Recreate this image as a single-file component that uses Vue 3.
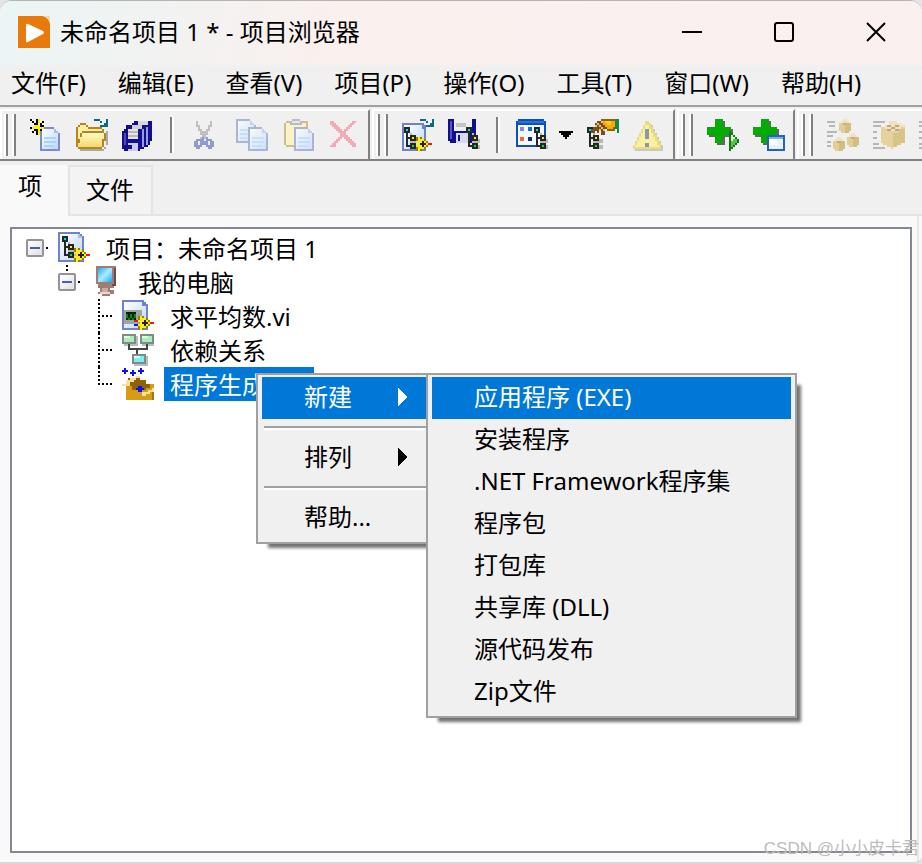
<template>
  <div class="window">
    <svg class="icon-defs" aria-hidden="true">
      <defs>
        <linearGradient id="paper" x1="0" y1="0" x2="1" y2="1">
          <stop offset="0" stop-color="#ffffff" />
          <stop offset="1" stop-color="#bcd6fb" />
        </linearGradient>
        <linearGradient id="screen" x1="0" y1="0" x2="1" y2="1">
          <stop offset="0" stop-color="#28a8e8" />
          <stop offset="0.5" stop-color="#a8ecff" />
          <stop offset="1" stop-color="#10b0f4" />
        </linearGradient>
        <linearGradient id="folder" x1="0" y1="0" x2="0" y2="1">
          <stop offset="0" stop-color="#fffcc8" />
          <stop offset="1" stop-color="#f4d66a" />
        </linearGradient>

        <symbol id="page" viewBox="0 0 10 12">
          <path d="M0 0H7V1H8V2H9V3H10V12H0Z" fill="#7c8cc8" />
          <path d="M1 1H7V3H9V11H1Z" fill="url(#paper)" />
          <path d="M7 1H8V2H9V3H7Z" fill="#a9bce6" />
          <path d="M2 5H8V6H2ZM2 7H8V8H2ZM2 9H7V10H2Z" fill="#a6d4ff" />
        </symbol>
        <symbol id="nodes" viewBox="0 0 8 11">
          <path d="M3 3H4V6H8V8H6V9H8V11H4V10H3Z" fill="#b8b8b8" />
          <path d="M0 0H3V3H2V5H3V4H6V7H3V6H2V9H3V8H6V11H3V10H1V3H0Z" fill="#262626" />
          <path d="M1 1H2V2H1Z" fill="#00e0f0" />
          <path d="M4 5H5V6H4Z" fill="#fff000" />
          <path d="M4 9H5V10H4Z" fill="#00e820" />
        </symbol>
        <symbol id="tag" viewBox="0 0 8 7">
          <path d="M0 0H3V1H5V2H6V5H5V6H3V7H0V5H1V2H0Z" fill="#8c8400" />
          <path d="M1 0H2V1H4V2H5V3H6V4H5V5H4V6H2V7H1V5H0V4H1V3H0V2H1Z" fill="#ffe920" />
          <path d="M2 3H3V2H4V3H5V4H4V5H3V4H2Z" fill="#222" />
          <path d="M6 3H8V4H6Z" fill="#ff1010" />
        </symbol>
        <symbol id="swoop" viewBox="0 0 7 4">
          <path d="M0 0H3V1H4V2H6V0H7V4H3V3H5V2H3V1H0Z" fill="#0c6a84" />
        </symbol>
        <symbol id="plus" viewBox="0 0 13 13">
          <path d="M5 1H9V5H13V9H9V13H5V9H1V5H5Z" fill="#666" />
          <path d="M4 0H8V4H12V8H8V12H4V8H0V4H4Z" fill="#00ad00" />
        </symbol>
        <symbol id="box" viewBox="0 0 6 7">
          <path d="M0 2H1V1H2V0H4V1H5V2H6V6H5V7H1V6H0Z" fill="#e2cd96" />
          <path d="M3 3H4V2H6V6H5V7H3Z" fill="#d4bd80" />
          <path d="M1 1H5V2H1ZM2 0H4V1H2Z" fill="#efe2c2" />
          <path d="M2 2H4V3H2Z" fill="#c8ac80" />
        </symbol>

        <symbol id="icon-new" viewBox="0 0 16 16">
          <use href="#page" x="5" y="4" width="10" height="12" />
          <path d="M0 0H1V1H0ZM1 1H2V2H1ZM2 2H3V3H2ZM6 1H7V2H6ZM5 2H6V3H5ZM3 0H4V3H3ZM0 4H3V5H0ZM5 3H7V4H5ZM2 5H3V6H2ZM1 6H2V7H1ZM3 5H4V8H3ZM5 5H6V6H5Z" fill="#000" />
          <path d="M4 0H5V2H4ZM2 3H5V2H4V1H5V4H7V5H5V8H4V5H1V4H2Z" fill="#fff200" />
        </symbol>
        <symbol id="icon-open" viewBox="0 0 16 16">
          <path d="M2 15H14V14H15V6H16V13H15V15H14V16H2Z" fill="#aaa" />
          <path d="M0 4H1V3H2V2H5V3H6V4H13V5H14V7H15V11H14V14H13V15H1V14H0Z" fill="#b58420" />
          <path d="M1 4H2V3H5V4H6V5H13V6H3V7H2V10H1Z" fill="#fff0a0" />
          <path d="M3 7H14V10H13V14H1V12H2V9H3Z" fill="url(#folder)" />
          <use href="#swoop" x="9" y="0" width="7" height="4" />
        </symbol>
        <symbol id="icon-save-all" viewBox="0 0 16 16">
          <path d="M5 2H6V1H15V11H14V13H13V14H11V15H5Z" fill="#10108e" />
          <path d="M8 1H13V3H8Z" fill="#d8d8d8" />
          <path d="M2 3H12V14H10V15H2Z" fill="#10108e" />
          <path d="M5 3H10V5H5Z" fill="#cfcfcf" />
          <path d="M12 4H13V13H12ZM10 5H11V14H10Z" fill="#9a9adc" />
          <path d="M0 6H1V5H10V15H9V16H1V15H0Z" fill="#10108e" />
          <path d="M3 5H8V10H3Z" fill="#e4e4e4" />
          <path d="M3 6H8V7H3ZM3 8H8V9H3Z" fill="#b8b8b8" />
          <path d="M3 12H8V16H3Z" fill="#c9c9f2" />
          <path d="M3 13H5V15H3Z" fill="#10108e" />
          <path d="M1 7H2V13H1Z" fill="#4a4ab8" />
        </symbol>
        <symbol id="icon-cut" viewBox="0 0 16 16">
          <path d="M3 1H4V3H5V5H6V6H8V5H9V3H10V1H11V4H10V6H9V8H8V9H9V10H5V9H6V8H5V6H4V4H3Z" fill="#c0c0c0" />
          <path d="M3 10H6V9H7V13H6V14H5V15H3V14H2V11H3ZM4 11H5V13H4ZM8 9H9V10H11V11H12V14H11V15H9V14H8V13H7V11H8ZM9 11H10V13H9Z" fill="#8e9bd0" fill-rule="evenodd" />
        </symbol>
        <symbol id="icon-copy" viewBox="0 0 16 16">
          <g opacity="0.6">
            <use href="#page" x="0" y="0" width="10" height="12" />
            <use href="#page" x="6" y="4" width="10" height="12" />
          </g>
        </symbol>
        <symbol id="icon-paste" viewBox="0 0 16 16">
          <g opacity="0.6">
            <path d="M2 1H13V13H12V14H2V13H1V2H2Z" fill="#bd9a4e" />
            <path d="M2 2H12V13H2Z" fill="#fff6ae" />
            <path d="M4 1H5V0H9V1H10V3H4Z" fill="#8f98a8" />
            <path d="M5 1H9V2H5Z" fill="#dce0e8" />
            <use href="#page" x="6" y="4" width="10" height="12" />
          </g>
        </symbol>
        <symbol id="icon-delete" viewBox="0 0 16 16">
          <path d="M1 1H3V2H4V3H5V4H6V5H7V6H8V5H9V4H10V3H11V2H12V1H14V2H13V3H12V4H11V5H10V6H9V8H10V9H11V10H12V11H13V12H14V14H12V13H11V12H10V11H9V10H8V9H7V10H6V11H5V12H4V14H1V13H2V12H3V11H4V10H5V9H6V7H5V6H4V5H3V4H2V3H1Z" fill="#f4a9b6" />
        </symbol>

        <symbol id="icon-project" viewBox="0 0 16 16">
          <path d="M0 0H11V1H12V2H13V15H0Z" fill="#6f83c8" />
          <path d="M1 1H10V3H12V14H1Z" fill="url(#paper)" />
          <path d="M10 1H11V2H12V3H10Z" fill="#aebfe8" />
          <use href="#nodes" x="2" y="2" width="8" height="11" />
          <use href="#tag" x="8" y="8" width="8" height="7" />
        </symbol>
        <symbol id="icon-new-project" viewBox="0 0 16 16">
          <path d="M0 2H11V3H12V16H0Z" fill="#6f83c8" />
          <path d="M1 3H10V5H11V15H1Z" fill="url(#paper)" />
          <use href="#nodes" x="1" y="4" width="8" height="11" />
          <use href="#tag" x="7" y="9" width="8" height="7" />
          <use href="#swoop" x="9" y="0" width="7" height="4" />
        </symbol>
        <symbol id="icon-save-project" viewBox="0 0 16 16">
          <path d="M0 0H14V12H1V11H0Z" fill="#10108e" />
          <path d="M3 0H12V6H3Z" fill="#eee" />
          <path d="M4 2H9V4H4Z" fill="#c4c4c4" />
          <path d="M4 7H10V12H4Z" fill="#d8d8ee" />
          <path d="M5 8H6V11H5Z" fill="#10108e" />
          <path d="M1 1H2V10H1Z" fill="#5555c0" />
          <use href="#nodes" x="9" y="4" width="8" height="11" />
        </symbol>
        <symbol id="icon-view" viewBox="0 0 16 16">
          <path d="M0 1H1V0H14V1H15V14H0Z" fill="#0b50c0" />
          <path d="M1 3H14V13H1Z" fill="#f6faff" />
          <path d="M1 1H14V2H1Z" fill="#2c72dc" />
          <path d="M2 4H4V6H2Z" fill="#8a8ace" />
          <path d="M6 4H8V6H6Z" fill="#0a70e0" />
          <path d="M2 9H4V11H2Z" fill="#ff6430" />
          <path d="M6 9H8V11H6Z" fill="#0a3090" />
          <use href="#nodes" x="9" y="4" width="8" height="11" />
        </symbol>
        <symbol id="icon-properties" viewBox="0 0 16 16">
          <use href="#nodes" x="0" y="4" width="8" height="11" />
          <path d="M2 5H3V4H4V2H5V1H7V0H10V5H9V8H7V6H6V7H5V6H4V7H2Z" fill="#785020" />
          <path d="M4 3H5V2H6V3H7V4H8V5H9V6H8V5H7V4H6V3H5V4H4ZM7 1H8V2H9V3H8V2H7ZM6 5H7V6H6Z" fill="#efc278" />
          <path d="M8 1H9V0H13V1H14V4H13V5H10V4H9V3H8Z" fill="#ffa600" />
          <path d="M9 1H12V3H10V2H9Z" fill="#ffcb28" />
          <path d="M7 0H14V1H7ZM10 5H13V4H14V6H10Z" fill="#8c640c" />
          <path d="M14 0H16V7H15V5H14Z" fill="#148848" />
        </symbol>
        <symbol id="icon-warning" viewBox="0 0 16 16">
          <path d="M7 2H9V3H10V5H11V7H12V9H13V11H14V13H15V16H1V14H2V12H3V10H4V8H5V6H6V4H7Z" fill="#c8c8c4" />
          <path d="M6 1H8V2H9V4H10V6H11V8H12V10H13V12H14V15H0V13H1V11H2V9H3V7H4V5H5V3H6Z" fill="#e8dc7c" />
          <path d="M6 3H8V5H9V7H10V9H11V11H12V13H13V14H1V13H2V11H3V9H4V7H5V5H6Z" fill="#faf0a2" />
          <path d="M6 5H8V10H6ZM6 12H8V14H6Z" fill="#9095ad" />
        </symbol>
        <symbol id="icon-add-run" viewBox="0 0 16 16">
          <use href="#plus" x="0" y="0" width="13" height="13" />
          <path d="M11 6H12V7H13V8H14V9H15V10H16V12H15V13H14V14H13V15H12V16H11Z" fill="#147a14" />
          <path d="M12 8H13V9H14V10H15V12H14V13H13V14H12Z" fill="#5cc04c" />
          <path d="M12 8H13V9H14V10H13V11H12Z" fill="#d8f6cc" />
        </symbol>
        <symbol id="icon-add-window" viewBox="0 0 16 16">
          <use href="#plus" x="0" y="0" width="13" height="13" />
          <path d="M7 8H16V16H7Z" fill="#2860bc" />
          <path d="M8 9H15V10H8Z" fill="#78aef0" />
          <path d="M8 10H15V15H8Z" fill="#e6f2ff" />
          <path d="M8 10H12V13H8Z" fill="#fff" />
        </symbol>
        <symbol id="icon-build-all" viewBox="0 0 16 16">
          <path d="M0 1H4V2H0ZM1 3H4V4H1ZM0 6H5V7H0ZM0 8H3V9H0ZM0 11H2V12H0ZM0 13H2V14H0Z" fill="#b6b6b6" />
          <use href="#box" x="6" y="0" width="6" height="7" />
          <use href="#box" x="3" y="9" width="6" height="7" />
          <use href="#box" x="10" y="7" width="6" height="7" />
        </symbol>
        <symbol id="icon-build" viewBox="0 0 16 16">
          <path d="M0 1H6V2H0ZM0 3H4V4H0ZM0 6H2V7H0ZM0 9H2V10H0ZM0 12H3V13H0ZM0 14H6V15H0Z" fill="#b6b6b6" />
          <path d="M4 4H6V3H8V1H12V2H14V3H16V12H14V13H12V14H10V15H9V14H7V13H5V12H4Z" fill="#e6d39c" />
          <path d="M10 7H13V5H16V12H14V13H12V14H10Z" fill="#d9c488" />
          <path d="M4 4H6V3H8V1H12V2H14V3H16V4H14V5H12V6H8V5H6V4Z" fill="#efe2c2" />
          <path d="M7 3H9V4H11V3H13V4H11V5H13V6H11V5H9V6H7V5H9V4H7Z" fill="#c4a67a" />
        </symbol>

        <symbol id="icon-computer" viewBox="0 0 16 16">
          <path d="M3 0H13V10H12V11H10V12H12V14H10V15H6V14H4V13H5V11H4V9H3Z" fill="#a07c74" />
          <path d="M4 1H11V8H4Z" fill="url(#screen)" />
          <path d="M12 1H13V10H11V9H12Z" fill="#6c4c48" />
          <path d="M6 11H9V13H6Z" fill="#c8aca4" />
          <path d="M5 13H10V14H5Z" fill="#e6d8d0" />
        </symbol>
        <symbol id="icon-vi" viewBox="0 0 16 16">
          <path d="M0 0H11V1H12V2H13V15H0Z" fill="#6f83c8" />
          <path d="M1 1H10V3H12V14H1Z" fill="url(#paper)" />
          <path d="M1 5H10V12H1Z" fill="#a3a3a3" />
          <path d="M2 6H7V10H2Z" fill="#002800" />
          <path d="M2 7H3V9H2ZM3 9H4V10H3ZM4 7H5V9H4ZM5 9H6V10H5ZM6 7H7V9H6Z" fill="#008818" />
          <path d="M6 10H8V11H6Z" fill="#f01010" />
          <path d="M6 12H8V13H6Z" fill="#1010ff" />
          <use href="#tag" x="8" y="8" width="8" height="7" />
        </symbol>
        <symbol id="icon-dependencies" viewBox="0 0 16 16">
          <path d="M3 5H4V7H12V5H13V8H8V11H7V8H3Z" fill="#444" />
          <path d="M1 1H8V6H1ZM10 1H16V6H10ZM6 11H13V16H6Z" fill="#bcbcbc" />
          <path d="M0 0H7V5H0ZM9 0H16V5H9ZM5 10H12V15H5Z" fill="#7c8c88" />
          <path d="M1 1H6V4H1ZM10 1H15V4H10Z" fill="#aaeeb4" />
          <path d="M6 11H11V14H6Z" fill="#78f0f8" />
          <path d="M1 1H4V2H1ZM10 1H13V2H10ZM6 11H9V12H6Z" fill="#e4fce8" />
          <path d="M3 5H4V7H3ZM12 5H13V7H12Z" fill="#444" />
        </symbol>
        <symbol id="icon-build-specs" viewBox="0 0 16 16">
          <path d="M1 0H2V1H3V2H2V3H1V2H0V1H1ZM5 1H6V2H7V3H6V4H5V3H4V2H5ZM9 0H10V1H11V2H10V3H9V2H8V1H9Z" fill="#1010ee" />
          <path d="M2 8H16V16H2Z" fill="#d79c16" />
          <path d="M3 5H9V6H12V8H14V10H12V11H5V9H2V8H3Z" fill="#8f6208" />
          <path d="M0 8H2V6H4V5H7V4H9V5H7V6H6V7H4V9H0Z" fill="#f9e39a" />
          <path d="M10 12H13V11H15V10H16V12H14V13H12V14H10Z" fill="#f9e39a" />
          <path d="M8 9H10V10H11V11H10V12H8V11H7V10H8Z" fill="#1010ee" />
          <path d="M15 12H16V16H15Z" fill="#aa720c" />
        </symbol>
      </defs>
    </svg>

    <header class="title-bar">
      <svg class="app-icon" viewBox="0 0 32 32" aria-hidden="true">
        <path d="M0 0H25Q31 1 32 8V32H0Z" fill="#e87a0c" />
        <path d="M25 0H32V7Q30 2 25 0Z" fill="#f6d3b2" />
        <path d="M8 9Q8 7 10 8L25 15Q27 16.5 25 18L10 26Q8 27 8 25Z" fill="#fff" />
      </svg>
      <h1 class="title">未命名项目 1 * - 项目浏览器</h1>
      <div class="window-controls">
        <button class="control" type="button" aria-label="最小化">
          <svg viewBox="0 0 20 20"><path d="M0 10H20" /></svg>
        </button>
        <button class="control" type="button" aria-label="最大化">
          <svg viewBox="0 0 20 20"><rect x="1" y="1" width="18" height="18" rx="2" /></svg>
        </button>
        <button class="control" type="button" aria-label="关闭">
          <svg viewBox="0 0 20 20"><path d="M1 1L19 19M19 1L1 19" /></svg>
        </button>
      </div>
    </header>

    <nav class="menu-bar">
      <button v-for="menu in menus" :key="menu" class="menu-button" type="button">{{ menu }}</button>
    </nav>

    <div class="toolbars">
      <div v-for="(group, index) in toolbars" :key="index" class="toolbar" role="toolbar">
        <span class="grip"></span>
        <template v-for="(tool, i) in group" :key="i">
          <span v-if="tool.separator" class="tool-separator"></span>
          <button
            v-else
            class="tool"
            :class="{ 'has-arrow': tool.arrow }"
            type="button"
            :disabled="tool.disabled"
            :aria-label="tool.label"
          >
            <svg class="icon"><use :href="'#icon-' + tool.icon" /></svg>
            <svg v-if="tool.arrow" class="drop-arrow" viewBox="0 0 14 8">
              <path d="M0 0H14V2H12V4H10V6H8V8H6V6H4V4H2V2H0Z" />
            </svg>
          </button>
        </template>
      </div>
    </div>

    <div class="tabs" role="tablist">
      <button
        v-for="tab in tabs"
        :key="tab"
        class="tab"
        :class="{ active: tab === activeTab }"
        type="button"
        role="tab"
        :aria-selected="tab === activeTab"
        @click="activeTab = tab"
      >
        {{ tab }}
      </button>
    </div>

    <main class="pane">
      <div class="tree-panel">
        <ul class="tree" role="tree">
          <li
            v-for="node in nodes"
            :key="node.label"
            class="node"
            :class="'level-' + node.level"
            role="treeitem"
          >
            <span class="joint" :class="node.joint">
              <button v-if="node.expandable" class="expander" type="button" aria-label="折叠"></button>
            </span>
            <svg class="icon"><use :href="'#icon-' + node.icon" /></svg>
            <span class="node-label" :class="{ selected: node.selected }">{{ node.label }}</span>
          </li>
        </ul>

        <div class="popup context-menu" role="menu">
          <button class="popup-item highlighted" type="button" role="menuitem">
            新建
            <svg class="sub-arrow" viewBox="0 0 10 18"><path d="M0 0L10 9L0 18Z" /></svg>
          </button>
          <hr class="popup-separator" />
          <button class="popup-item" type="button" role="menuitem">
            排列
            <svg class="sub-arrow" viewBox="0 0 10 18"><path d="M0 0L10 9L0 18Z" /></svg>
          </button>
          <hr class="popup-separator" />
          <button class="popup-item" type="button" role="menuitem">帮助...</button>

          <div class="popup sub-menu" role="menu">
            <button
              v-for="(item, index) in buildTypes"
              :key="item"
              class="popup-item"
              :class="{ highlighted: index === 0 }"
              type="button"
              role="menuitem"
            >
              {{ item }}
            </button>
          </div>
        </div>
      </div>
    </main>

    <span class="watermark">CSDN @小小皮卡君</span>
  </div>
</template>

<script setup>
import { ref } from "vue";

const menus = ["文件(F)", "编辑(E)", "查看(V)", "项目(P)", "操作(O)", "工具(T)", "窗口(W)", "帮助(H)"];

const toolbars = [
  [
    { icon: "new", label: "新建" },
    { icon: "open", label: "打开" },
    { icon: "save-all", label: "保存全部" },
    { separator: true },
    { icon: "cut", label: "剪切", disabled: true },
    { icon: "copy", label: "复制", disabled: true },
    { icon: "paste", label: "粘贴", disabled: true },
    { icon: "delete", label: "删除", disabled: true },
  ],
  [
    { icon: "new-project", label: "新建项目" },
    { icon: "save-project", label: "保存项目" },
    { separator: true },
    { icon: "view", label: "筛选视图", arrow: true },
    { icon: "properties", label: "属性" },
    { icon: "warning", label: "解决冲突", disabled: true },
  ],
  [
    { icon: "add-run", label: "添加目标" },
    { icon: "add-window", label: "新建VI" },
  ],
  [
    { icon: "build-all", label: "全部生成", disabled: true },
    { icon: "build", label: "生成", disabled: true },
    { icon: "build", label: "部署", disabled: true },
  ],
];

const tabs = ["项", "文件"];
const activeTab = ref("项");

const nodes = [
  { label: "项目：未命名项目 1", icon: "project", level: 0, joint: "root", expandable: true },
  { label: "我的电脑", icon: "computer", level: 1, joint: "end", expandable: true },
  { label: "求平均数.vi", icon: "vi", level: 2, joint: "through" },
  { label: "依赖关系", icon: "dependencies", level: 2, joint: "through" },
  { label: "程序生成规范", icon: "build-specs", level: 2, joint: "end", selected: true },
];

const buildTypes = [
  "应用程序 (EXE)",
  "安装程序",
  ".NET Framework程序集",
  "程序包",
  "打包库",
  "共享库 (DLL)",
  "源代码发布",
  "Zip文件",
];
</script>

<style>
body {
  margin: 0;
  background: #e4e4e4;
}
</style>

<style scoped>
.window {
  position: relative;
  box-sizing: border-box;
  display: flex;
  flex-direction: column;
  min-height: 100vh;
  border-top: 1px solid #b4b4b4;
  border-bottom: 2px solid #d8d8d8;
  border-radius: 12px 12px 8px 0;
  background: #f9f9f9;
  color: #000;
  font-family: "Noto Sans", "Noto Sans CJK SC", sans-serif;
  font-size: 24px;
  line-height: 34px;
  white-space: nowrap;
  overflow: hidden;
}

button {
  padding: 0;
  border: 0;
  background: none;
  color: inherit;
  font: inherit;
  white-space: nowrap;
}

.icon-defs {
  position: absolute;
  width: 0;
  height: 0;
}

.icon {
  flex: none;
  display: block;
  width: 32px;
  height: 32px;
  shape-rendering: crispEdges;
}

/* Title bar */
.title-bar {
  display: flex;
  align-items: center;
  box-sizing: border-box;
  height: 64px;
  padding: 0 0 2px 18px;
  background: linear-gradient(100deg, #ebf5f5 0%, #f0f3f2 15%, #faf0ee 36%, #f9f0ef 100%);
}

.app-icon {
  width: 32px;
  height: 32px;
}

.title {
  flex: 1;
  margin: 0 0 0 10px;
  font-size: 24px;
  font-weight: 400;
}

.window-controls {
  display: flex;
}

.control {
  display: flex;
  align-items: center;
  justify-content: center;
  width: 92px;
  height: 60px;
}

.control svg {
  width: 20px;
  height: 20px;
  fill: none;
  stroke: #000;
  stroke-width: 2;
}

/* Menu bar */
.menu-bar {
  display: flex;
  gap: 32px;
  box-sizing: border-box;
  height: 42px;
  padding: 0 0 4px 11px;
  background: #f0f0f0;
  border-bottom: 2px solid #a0a0a0;
}

/* Toolbars */
.toolbars {
  display: flex;
  height: 50px;
  padding-top: 2px;
  background: #f0f0f0;
  border-bottom: 2px solid #808080;
  overflow: hidden;
}

.toolbar {
  flex: none;
  display: flex;
  align-items: center;
  height: 50px;
  padding: 0 1px 0 4px;
  border-top: 2px solid #fff;
  border-right: 2px solid #808080;
  box-shadow: inset 2px 0 #fff;
  box-sizing: border-box;
  margin-right: 2px;
}

.toolbar:last-child {
  border-right: 0;
}

.grip {
  width: 12px;
  height: 42px;
  margin-right: 7px;
  background: linear-gradient(
    90deg,
    #fff 0 2px,
    #808080 2px 4px,
    transparent 4px 8px,
    #fff 8px 10px,
    #808080 10px 12px
  );
}

.tool {
  display: flex;
  align-items: center;
  padding: 0 7px;
}

.has-arrow {
  gap: 11px;
}

.drop-arrow {
  width: 14px;
  height: 8px;
}

.tool-separator {
  width: 2px;
  height: 36px;
  margin: 0 9px;
  background: #808080;
  border-right: 2px solid #fff;
}

/* Tabs */
.tabs {
  display: flex;
  height: 55px;
  box-sizing: border-box;
  padding-top: 4px;
  background: #f0f0f0;
  box-shadow: inset 0 -2px #e4e4e4;
}

.tab {
  padding: 0 17px 2px 16px;
  background: #f3f3f3;
  border: 2px solid #e4e4e4;
}

.tab.active {
  padding: 0 26px 10px 18px;
  background: #f9f9f9;
  border: 0;
}

/* Project tree */
.pane {
  flex: 1;
  display: flex;
  margin-right: 3px;
  padding: 11px 5px 9px 10px;
  border-right: 2px solid #e8e8e8;
}

.tree-panel {
  position: relative;
  flex: 1;
  border: 2px solid #828790;
  background: #fff;
}

.tree {
  margin: 0;
  padding: 2px 0 0 14px;
  list-style: none;
}

.node {
  display: flex;
  align-items: center;
  height: 34px;
}

.level-1 {
  padding-left: 32px;
}

.level-2 {
  padding-left: 64px;
}

.joint {
  display: flex;
  align-items: center;
  width: 32px;
  height: 34px;
  background-image:
    repeating-linear-gradient(90deg, #000 0 2px, transparent 2px 4px),
    repeating-linear-gradient(180deg, #000 0 2px, transparent 2px 4px);
  background-repeat: no-repeat;
  background-position: 8px 16px, 8px 0;
}

.joint.root {
  background-size: 16px 2px, 0 0;
}

.joint.end {
  background-size: 16px 2px, 2px 17px;
}

.joint.through {
  background-size: 16px 2px, 2px 34px;
}

.expander {
  width: 18px;
  height: 18px;
  border: 2px solid #949494;
  border-radius: 2px;
  background:
    linear-gradient(#4560b0, #4560b0) center / 10px 2px no-repeat,
    linear-gradient(135deg, #fff, #e0e0e0);
}

.node-label {
  margin-left: 10px;
  padding: 2px 0 0 6px;
  line-height: 32px;
}

.node-label.selected {
  background: #0078d7;
  color: #fff;
}

/* Popup menus */
.popup {
  position: absolute;
  display: flex;
  flex-direction: column;
  box-sizing: border-box;
  padding: 2px 4px 3px;
  border: 2px solid #a0a0a0;
  background: #f0f0f0;
  box-shadow: 8px 8px 3px -4px rgba(0, 0, 0, 0.55);
}

.context-menu {
  top: 144px;
  left: 244px;
  width: 172px;
  padding-right: 0;
}

.sub-menu {
  top: -2px;
  left: 168px;
}

.popup-item {
  display: flex;
  align-items: center;
  justify-content: space-between;
  height: 42px;
  padding: 0 18px 2px 42px;
  text-align: left;
}

.sub-menu .popup-item {
  padding-right: 60px;
}

.popup-item.highlighted {
  background: #0078d7;
  color: #fff;
}

.sub-arrow {
  width: 10px;
  height: 18px;
  fill: currentColor;
  shape-rendering: crispEdges;
}

.popup-separator {
  width: auto;
  height: 2px;
  margin: 7px 0 7px 2px;
  border: 0;
  border-bottom: 2px solid #fff;
  background: #a0a0a0;
}

.watermark {
  position: absolute;
  right: 3px;
  bottom: 0;
  color: #bcbcbc;
  font-family: "Liberation Sans", "Noto Sans CJK SC", sans-serif;
  font-size: 17px;
  line-height: 26px;
}
</style>
